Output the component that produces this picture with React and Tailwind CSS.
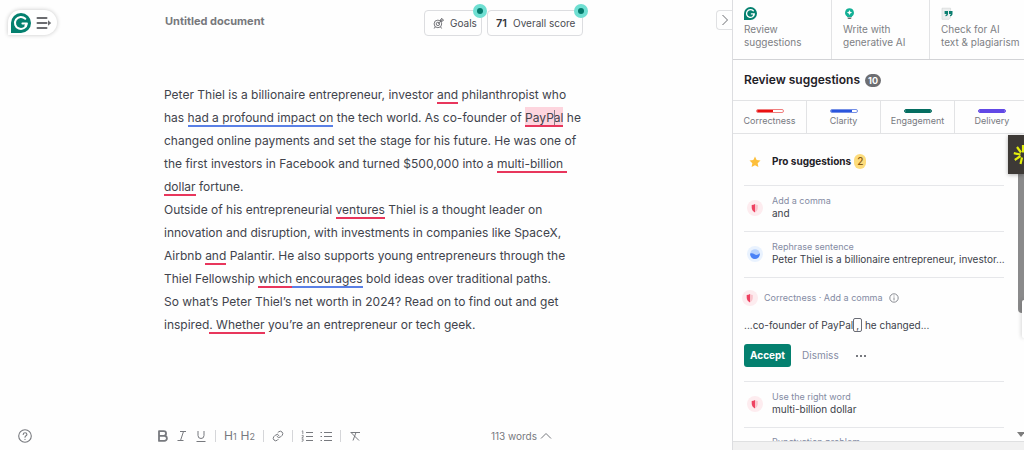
import { useState } from "react";
import clsx from "clsx";

const modes = [
    { icon: 'logo', lines: ['Review', 'suggestions'] },
    { icon: 'bulb', lines: ['Write with', 'generative AI'] },
    { icon: 'quote', lines: ['Check for AI', 'text & plagiarism'] },
];

const scores = [
    { label: 'Correctness', value: 64, bar: 'bg-[#ea1010]', border: 'border-[#f07f7f]' },
    { label: 'Clarity', value: 84, bar: 'bg-[#2a55dd]', border: 'border-[#7590e6]' },
    { label: 'Engagement', value: 100, bar: 'bg-[#046d60]', border: 'border-[#046d60]' },
    { label: 'Delivery', value: 100, bar: 'bg-[#6148e6]', border: 'border-[#6148e6]' },
];

const Logo = ({ className }) => (
    <svg viewBox="0 0 20 20" className={className} aria-hidden="true">
        <path d="M10 0a10 10 0 1 1 0 20H0V10A10 10 0 0 1 10 0Z" fill="#04806f" />
        <path
            d="M14.3 5.8A6 6 0 1 0 15.9 10.6H11.4M15.9 10.6l-1.5 2.3"
            fill="none"
            stroke="#fff"
            strokeWidth="2"
            strokeLinecap="round"
            strokeLinejoin="round"
        />
    </svg>
);

const ModeIcon = ({ name }) => {
    if (name === 'logo') return <Logo className="size-[13px]" />;
    if (name === 'bulb') {
        return (
            <svg viewBox="0 0 13 13" className="size-[13px]" aria-hidden="true">
                <path d="M6.5 1.3a4.4 4.4 0 0 1 2.4 8.1v.5H4.1v-.5A4.4 4.4 0 0 1 6.5 1.3Z" fill="#14b096" />
                <path d="M6.5 3.1l.8 1.7 1.8.8-1.8.8-.8 1.7-.8-1.7-1.8-.8 1.8-.8z" fill="#fff" />
                <path d="M4.5 10.6h4v.7l-1 .7h-2l-1-.7z" fill="#5b6b69" />
            </svg>
        );
    }
    return (
        <svg viewBox="0 0 13 13" className="size-[13px]" aria-hidden="true">
            <path d="M1 1.2h8.6v9.4l-1.6 1.7H1z" fill="#eceeee" stroke="#cfd3d3" strokeWidth=".6" />
            <path d="M3.6 4.1h3.4v2.6c0 1.4-.9 2.2-2.5 2.5v-1.1c.7-.3 1-.7 1-1.2H3.6zM8 4.1h3.5v2.6c0 1.4-.9 2.2-2.5 2.5v-1.1c.7-.3 1-.7 1-1.2H8z" fill="#0b7f70" />
        </svg>
    );
};

const ShieldIcon = () => (
    <svg viewBox="0 0 16 16" className="size-4 shrink-0" aria-hidden="true">
        <circle cx="8" cy="8" r="8" fill="#fdecef" />
        <path d="M8 4v8.4C5.9 11.4 4.7 9.6 4.7 7.4V5C5.9 5 7 4.7 8 4Z" fill="#ee4261" />
        <path d="M8 4c1 .7 1.8 1 2.8 1v2.4C10.8 9.6 9.8 11.4 8 12.4Z" fill="#fac3cc" />
    </svg>
);

const ClarityIcon = () => (
    <svg viewBox="0 0 16 16" className="size-4 shrink-0" aria-hidden="true">
        <circle cx="8" cy="8" r="8" fill="#e9f2fe" />
        <circle cx="8" cy="8" r="4.8" fill="#b9d3fd" />
        <path d="M3.2 7.6c1.6-.9 2.8-.4 4 .5 1.7 1.2 3.4 1.3 5.5-.8a4.8 4.8 0 1 1-9.5.3Z" fill="#4a82f7" />
    </svg>
);

const Red = ({ children }) => <span className="border-b-2 border-[#e8365c]">{children}</span>;
const Blue = ({ children }) => <span className="border-b-2 border-[#5a80e6]">{children}</span>;

const Suggestion = ({ icon, label, children }) => (
    <li className="flex h-[46px] items-start gap-[9px] border-b border-[#e6e7ea] pl-[3px] pt-2">
        <span className="mt-[6px] shrink-0">{icon}</span>
        <button type="button" className="min-w-0 flex-1 whitespace-nowrap text-left">
            <span className="block text-[9px] leading-[13px] text-[#848ba3]">{label}</span>
            <span className="block text-[10px] leading-[13px] text-[#3c3f4a]">{children}</span>
        </button>
    </li>
);

const Header = () => (
    <header className="flex h-[46px] shrink-0 items-start pl-2 pt-[10px]">
        <button
            type="button"
            aria-label="Open menu"
            className="flex h-[25px] w-[49px] shrink-0 items-center gap-[5px] rounded-full rounded-bl-md bg-white pl-[3px] shadow-[0_0_4px_rgba(0,0,0,0.22)]"
        >
            <Logo className="size-5" />
            <svg viewBox="0 0 16 14" className="h-[14px] w-4" fill="none" stroke="#6b6c70" strokeWidth="2" strokeLinecap="round" aria-hidden="true">
                <path d="M1.5 2h9M1.5 7h9M1.5 12h9" />
                <path d="M12 4.2 15.2 7 12 9.8z" fill="#6b6c70" stroke="none" />
            </svg>
        </button>
        <h1 className="ml-[108px] flex-1 text-[11px] font-bold leading-[23px] text-[#77787c]">Untitled document</h1>
        <div className="mr-[149px] flex gap-[5px]">
            <button type="button" className="relative flex h-[26px] w-[58px] items-center gap-[6px] rounded border border-[#dcdde0] pl-2 text-[10px] text-[#4a4c52]">
                <svg viewBox="0 0 11 11" className="size-[11px]" fill="none" stroke="#66686d" strokeWidth=".9" aria-hidden="true">
                    <circle cx="4.9" cy="5.9" r="3.8" />
                    <circle cx="4.9" cy="5.9" r="1.7" />
                    <path d="M4.9 5.9 9 1.8M7.5 3.3V1.5L9 .3v1.6h1.6L9.3 3.4zM2.2 8.8 1.2 10.5M7.6 8.8l1 1.7" />
                </svg>
                Goals
                <Hotspot />
            </button>
            <button type="button" className="relative flex h-[26px] w-24 items-center gap-[6px] whitespace-nowrap rounded border border-[#dcdde0] pl-2 text-[10px] text-[#4a4c52]">
                <b className="text-[11px] font-semibold text-[#33353b]">71</b>
                Overall score
                <Hotspot />
            </button>
        </div>
    </header>
);

const Hotspot = () => (
    <span className="absolute -right-[6px] -top-[7px] flex size-[14px] items-center justify-center rounded-full bg-[#6fdfd2]">
        <span className="size-[6px] rounded-full bg-[#047a6c]" />
    </span>
);

const Editor = () => (
    <article className="flex-1 whitespace-nowrap pl-[164px] pt-[37px] text-[12px] leading-[23px] text-[#41434c]">
        <p>
            Peter Thiel is a billionaire entrepreneur, investor <Red>and</Red> philanthropist who<br />
            has <Blue>had a profound impact on</Blue> the tech world. As co-founder of{' '}
            <span className="border-b-2 border-[#e8365c] bg-[#fdd5de] pt-[3px]">
                PayP<span className="relative"><i className="absolute left-0 top-0 h-[15px] w-px bg-[#8a7b84]" />al</span>
            </span> he<br />
            changed online payments and set the stage for his future. He was one of<br />
            the first investors in Facebook and turned $500,000 into a <Red>multi-billion&nbsp;</Red><br />
            <Red>dollar</Red> fortune.
        </p>
        <p>
            Outside of his entrepreneurial <Red>ventures</Red> Thiel is a thought leader on<br />
            innovation and disruption, with investments in companies like SpaceX,<br />
            Airbnb <Red>and</Red> Palantir. He also supports young entrepreneurs through the<br />
            Thiel Fellowship <Red>which</Red><Blue> encourages</Blue> bold ideas over traditional paths.
        </p>
        <p>
            So what’s Peter Thiel’s net worth in 2024? Read on to find out and get<br />
            inspired<Red>. Whether</Red> you’re an entrepreneur or tech geek.
        </p>
    </article>
);

const Divider = () => <span className="h-3 w-px bg-[#d5d6d9]" />;

const Toolbar = () => (
    <footer className="flex h-7 shrink-0 items-center pl-[18px] text-[#77797e]">
        <button type="button" aria-label="Help">
            <svg viewBox="0 0 14 14" className="size-[14px]" fill="none" stroke="currentColor" strokeWidth="1.1" strokeLinecap="round" aria-hidden="true">
                <circle cx="7" cy="7" r="6.3" />
                <path d="M5.2 5.4c.1-2.3 3.7-2.3 3.7 0C8.9 6.8 7 6.8 7 8.3M7 10.3v.2" />
            </svg>
        </button>
        <div className="ml-[125px] flex items-center gap-2">
            <div className="flex gap-[7px]">
                <button type="button" aria-label="Bold">
                    <svg viewBox="0 0 12 12" className="size-3" fill="none" stroke="currentColor" strokeWidth="1.8" aria-hidden="true">
                        <path d="M2 1.2h4.7a2.3 2.3 0 0 1 0 4.7H2zM2 5.9h5.4a2.5 2.5 0 0 1 0 5H2z" strokeLinejoin="round" />
                    </svg>
                </button>
                <button type="button" aria-label="Italic">
                    <svg viewBox="0 0 12 12" className="size-3" fill="none" stroke="currentColor" aria-hidden="true">
                        <path d="M4 1.5h6M1.5 10.5h6M7.5 1.5l-3 9" />
                    </svg>
                </button>
                <button type="button" aria-label="Underline">
                    <svg viewBox="0 0 12 12" className="size-3" fill="none" stroke="currentColor" aria-hidden="true">
                        <path d="M3 1v4.5a3 3 0 0 0 6 0V1M1.5 11.5h9" />
                    </svg>
                </button>
            </div>
            <Divider />
            <div className="flex gap-1 text-[12px] leading-3">
                <button type="button" aria-label="Heading 1">H<span className="text-[9px]">1</span></button>
                <button type="button" aria-label="Heading 2">H<span className="text-[9px]">2</span></button>
            </div>
            <Divider />
            <button type="button" aria-label="Link">
                <svg viewBox="0 0 24 24" className="size-3" fill="none" stroke="currentColor" strokeWidth="2" strokeLinecap="round" aria-hidden="true">
                    <path d="M10 13a5 5 0 0 0 7.5.5l3-3a5 5 0 0 0-7-7l-1.7 1.7" />
                    <path d="M14 11a5 5 0 0 0-7.5-.5l-3 3a5 5 0 0 0 7 7l1.7-1.7" />
                </svg>
            </button>
            <Divider />
            <div className="flex gap-[7px]">
                <button type="button" aria-label="Numbered list">
                    <svg viewBox="0 0 12 12" className="size-3" fill="none" stroke="currentColor" aria-hidden="true">
                        <path d="M5 2.5h7M5 6.5h7M5 10.5h7" />
                        <path d="M.8 1.3l1-.5v3.4M.7 5.6h1.6v1L.8 7.8h1.7M.7 9h1.6L1.5 10.2c1.4 0 1 1.4-.8 1.2" strokeWidth=".8" />
                    </svg>
                </button>
                <button type="button" aria-label="Bulleted list">
                    <svg viewBox="0 0 12 12" className="size-3" fill="none" stroke="currentColor" aria-hidden="true">
                        <path d="M4 2.5h8M4 6.5h8M4 10.5h8M.5 2.5H2M.5 6.5H2M.5 10.5H2" />
                    </svg>
                </button>
            </div>
            <Divider />
            <button type="button" aria-label="Clear formatting">
                <svg viewBox="0 0 12 12" className="size-3" fill="none" stroke="currentColor" aria-hidden="true">
                    <path d="M2 2.5h9M7 2.5l-3 8M1.5 2l8.5 8.5" />
                </svg>
            </button>
        </div>
        <button type="button" className="ml-auto mr-[180px] flex items-center gap-[3px] text-[10px]">
            113 words
            <svg viewBox="0 0 12 8" className="h-2 w-3" fill="none" stroke="currentColor" aria-hidden="true">
                <path d="M1 6.5l5-5 5 5" />
            </svg>
        </button>
    </footer>
);

const Sidebar = ({ mode, setMode }) => (
    <aside className="flex w-[292px] shrink-0 flex-col overflow-hidden border-l border-[#dcdde0]">
        <nav className="flex h-[60px] shrink-0 border-b border-[#d2d3d6]">
            {modes.map((item, i) => (
                <button
                    key={item.icon}
                    type="button"
                    aria-pressed={mode === i}
                    onClick={() => setMode(i)}
                    className={clsx(
                        'flex w-[98px] shrink-0 flex-col items-start whitespace-nowrap pl-[11px] pt-[7px] text-left text-[10px] leading-[13px] text-[#7d7f84]',
                        i > 0 && 'border-l border-[#e2e3e5]'
                    )}
                >
                    <ModeIcon name={item.icon} />
                    <span className="mt-[3px]">{item.lines[0]}<br />{item.lines[1]}</span>
                </button>
            ))}
        </nav>

        <div className="flex h-[41px] shrink-0 items-center gap-[5px] border-b border-[#e2e3e5] pl-[11px]">
            <h2 className="text-[12px] font-semibold text-[#1f2127]">Review suggestions</h2>
            <span className="rounded-full bg-[#6d6e72] px-[3px] text-[9px] font-bold leading-[13px] text-white">10</span>
        </div>

        <div className="flex h-[33px] shrink-0 border-b border-[#e2e3e5]">
            {scores.map((score) => (
                <button
                    key={score.label}
                    type="button"
                    className="flex w-[74px] shrink-0 flex-col items-center border-r border-[#e2e3e5] pt-2 text-[9px] leading-[13px] text-[#77797e] last:border-r-0"
                >
                    <span className={clsx('mb-px block h-1 w-7 overflow-hidden rounded-sm border', score.border)}>
                        <span className={clsx('block h-full', score.bar)} style={{ width: `${score.value}%` }} />
                    </span>
                    {score.label}
                </button>
            ))}
        </div>

        <div className="min-h-0 flex-1 overflow-hidden pl-[11px] pr-5">
            <div className="flex h-[52px] items-center border-b border-[#e6e7ea] pl-[5px] pt-1">
                <svg viewBox="0 0 24 24" className="size-3" fill="#fdbf3b" aria-hidden="true">
                    <path d="M12 1l3.3 7.2 7.7.9-5.7 5.3 1.5 7.8L12 18.3l-6.8 3.9 1.5-7.8L1 9.1l7.7-.9z" />
                </svg>
                <h3 className="ml-[11px] text-[10px] font-bold text-[#1f2127]">Pro suggestions</h3>
                <span className="ml-[3px] rounded-full bg-[#fddc7c] px-[3px] text-[10px] font-medium leading-[15px] text-[#8a5a10]">2</span>
            </div>
            <ul>
                <Suggestion icon={<ShieldIcon />} label="Add a comma">and</Suggestion>
                <Suggestion icon={<ClarityIcon />} label="Rephrase sentence">
                    Peter Thiel is a billionaire entrepreneur, investor...
                </Suggestion>
                <li className="h-[104px] border-b border-[#e6e7ea] pt-3">
                    <div className="-ml-[2px] flex items-center gap-[6px] text-[9px] leading-4 text-[#848ba3]">
                        <ShieldIcon />
                        Correctness · Add a comma
                        <button type="button" aria-label="More information">
                            <svg viewBox="0 0 10 10" className="size-[10px]" fill="none" stroke="#7d8087" strokeWidth=".9" aria-hidden="true">
                                <circle cx="5" cy="5" r="4.2" />
                                <path d="M5 4.4v3M5 2.5v1" />
                            </svg>
                        </button>
                    </div>
                    <p className="mt-[11px] text-[10px] leading-4 text-[#3c3f4a]">
                        ...co-founder of PayPal<ins className="rounded-[2px] border border-[#6a6c75] px-[2px] no-underline">,</ins> he changed...
                    </p>
                    <div className="mt-[11px] flex items-center text-[10px]">
                        <button type="button" className="h-[23px] w-[47px] rounded-[3px] bg-[#04806f] font-bold text-white">Accept</button>
                        <button type="button" className="ml-[11px] text-[#848ba3]">Dismiss</button>
                        <button type="button" aria-label="More actions" className="ml-[17px] flex gap-[2px]">
                            <i className="size-[2px] rounded-full bg-[#4a4c55]" />
                            <i className="size-[2px] rounded-full bg-[#4a4c55]" />
                            <i className="size-[2px] rounded-full bg-[#4a4c55]" />
                        </button>
                    </div>
                </li>
                <Suggestion icon={<ShieldIcon />} label="Use the right word">multi-billion dollar</Suggestion>
                <li className="pl-7 pt-[7px] text-[9px] leading-[13px] text-[#848ba3]">Punctuation problem</li>
            </ul>
        </div>
        <div className="h-[9px] shrink-0 border-t border-[#dfe0e1] bg-[#f1f1f1]" />
    </aside>
);

export default function App() {
    const [mode, setMode] = useState(0);

    return (
        <div className="relative flex h-screen overflow-hidden bg-[#fefefe] font-['Inter','Liberation_Sans',sans-serif]">
            <main className="relative flex min-w-0 flex-1 flex-col">
                <Header />
                <Editor />
                <Toolbar />
                <button
                    type="button"
                    aria-label="Collapse sidebar"
                    className="absolute right-0 top-[10px] flex h-5 w-4 items-center justify-center rounded-l border border-r-0 border-[#e0e1e3]"
                >
                    <svg viewBox="0 0 6 12" className="h-3 w-[6px]" fill="none" stroke="#6b6c70" aria-hidden="true">
                        <path d="M.5 1l5 5-5 5" />
                    </svg>
                </button>
            </main>
            <Sidebar mode={mode} setMode={setMode} />

            {/* scrollbar thumb and arrow */}
            <div className="absolute right-0 top-[174px] h-[139px] w-[6px] rounded-bl bg-[#8a8a8b]" />
            <div className="absolute right-0 top-[300px] h-[38px] w-[2px] rounded-l bg-white shadow-[0_0_4px_rgba(0,0,0,0.3)]" />
            <svg viewBox="0 0 8 5" className="absolute -right-[1px] top-[432px] h-[5px] w-2" aria-hidden="true">
                <path d="M0 0h8L4 5z" fill="#7d7d7d" />
            </svg>

            {/* floating widget */}
            <button
                type="button"
                aria-label="Open widget"
                className="absolute right-0 top-[135px] h-[39px] w-4 overflow-hidden bg-[#3d3936] shadow-[0_1px_4px_rgba(0,0,0,0.3)]"
            >
                <svg viewBox="0 0 11 22" className="ml-[5px] h-[22px] w-[11px]" stroke="#e3ee0c" strokeWidth="2.2" aria-hidden="true">
                    <path d="M7.5 10.5.8 9.2M7.5 12 1.8 16M8 8.5 4 3M9 13.5 7.5 20M10 8.5V1" />
                </svg>
            </button>
        </div>
    );
}
